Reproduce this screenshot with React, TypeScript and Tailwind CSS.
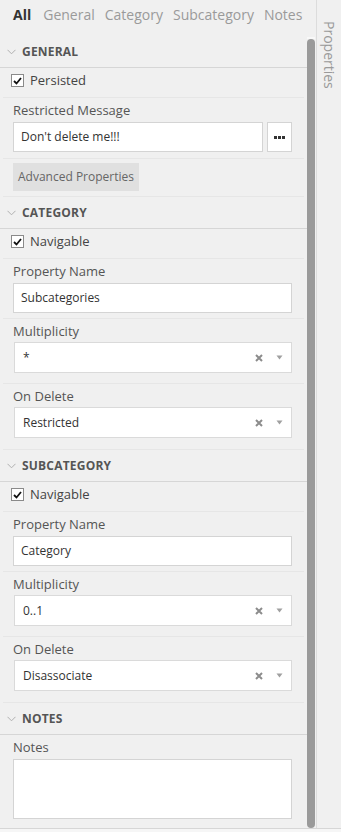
const font = { fontFamily: '"Open Sans", "Liberation Sans", sans-serif' }

function Chevron() {
  return (
    <svg width="9" height="6" viewBox="0 0 9 6" className="shrink-0">
      <polyline points="0.5,0.8 4.5,4.8 8.5,0.8" fill="none" stroke="#b0b0b0" strokeWidth="1" />
    </svg>
  )
}

function SectionHeader({ title }: { title: string }) {
  return (
    <div className="h-[32px] border-b border-[#d6d6d6] flex items-center pl-[7px] gap-[6px]">
      <Chevron />
      <span className="text-[12px] font-bold text-[#555] tracking-[0.2px]">{title}</span>
    </div>
  )
}

function CheckRow({ label }: { label: string }) {
  return (
    <div className="mx-[3px] h-[30px] border-b border-[#e6e6e6] pl-[8px] pt-[2px] flex items-start gap-[6px]">
      <div className="mt-[4px] h-[13px] w-[13px] border border-[#8a8a8a] bg-white flex items-center justify-center">
        <svg width="9" height="8" viewBox="0 0 9 8">
          <polyline points="1,4 3.5,6.5 8,1" fill="none" stroke="#111" strokeWidth="1.8" />
        </svg>
      </div>
      <span className="text-[13px] leading-[20px] text-[#444]">{label}</span>
    </div>
  )
}

function Label({ text }: { text: string }) {
  return <div className="h-[18px] leading-[18px] text-[13px] text-[#555]">{text}</div>
}

function TextField({ label, value }: { label: string; value: string }) {
  return (
    <div className="mx-[3px] border-b border-[#e6e6e6] pl-[10px] pr-[12px] pt-[3px] pb-[5px]">
      <Label text={label} />
      <div className="mt-[3px] h-[30px] border border-[#d4d4d4] bg-white flex items-center pl-[7px] text-[12px] text-[#333]">
        {value}
      </div>
    </div>
  )
}

function SelectField({ label, value, last }: { label: string; value: string; last?: boolean }) {
  return (
    <div className={`mx-[3px] border-b border-[#e6e6e6] pl-[10px] pr-[12px] pt-[3px] ${last ? "pb-[11px]" : "pb-[10px]"}`}>
      <Label text={label} />
      <div className="mt-[2px] ml-[1px] h-[31px] border border-[#dadada] bg-white flex items-center pl-[8px] pr-[8px] text-[12px] text-[#333]">
        <span className="flex-1">{value}</span>
        <svg width="8" height="8" viewBox="0 0 8 8" className="mr-[13px]">
          <path d="M1,1 L7,7 M7,1 L1,7" stroke="#8c8c8c" strokeWidth="2" />
        </svg>
        <svg width="7" height="5" viewBox="0 0 7 5">
          <polygon points="0.5,0.5 6.5,0.5 3.5,4.5" fill="#a0a0a0" />
        </svg>
      </div>
    </div>
  )
}

export default function App() {
  const tabs = ["General", "Category", "Subcategory", "Notes"]
  return (
    <div style={font} className="w-[341px] h-[832px] bg-[#f0f0f0] flex flex-col overflow-hidden">
      <div className="flex-1 flex min-h-0">
        <div className="w-[316px] flex flex-col">
          <div className="h-[36px] shrink-0 flex items-start pt-[4px] pl-[13px] gap-[10px] text-[14px] leading-[22px]">
            <span className="font-bold text-[#333] mr-[2px]">All</span>
            {tabs.map((t) => (
              <span key={t} className="text-[#9a9a9a]">{t}</span>
            ))}
          </div>
          <div className="flex-1 flex min-h-0">
            <div className="w-[307px] flex flex-col">
              <SectionHeader title="GENERAL" />
              <CheckRow label="Persisted" />
              <div className="mx-[3px] border-b border-[#e6e6e6] pl-[10px] pr-[12px] pt-[3px] pb-[6px]">
                <Label text="Restricted Message" />
                <div className="mt-[3px] flex gap-[4px]">
                  <div className="flex-1 h-[30px] border border-[#d4d4d4] bg-white flex items-center pl-[7px] text-[12px] text-[#333]">
                    Don't delete me!!!
                  </div>
                  <div className="w-[25px] h-[30px] border border-[#d4d4d4] bg-white flex items-center justify-center gap-[1px]">
                    <span className="w-[3px] h-[3px] bg-[#333]" />
                    <span className="w-[3px] h-[3px] bg-[#333]" />
                    <span className="w-[3px] h-[3px] bg-[#333]" />
                  </div>
                </div>
              </div>
              <div className="mx-[3px] border-b border-[#e6e6e6] pl-[10px] pt-[4px] pb-[5px]">
                <div className="inline-flex h-[28px] items-center px-[5px] bg-[#e0e0e0] text-[12px] text-[#666]">
                  Advanced Properties
                </div>
              </div>

              <SectionHeader title="CATEGORY" />
              <CheckRow label="Navigable" />
              <TextField label="Property Name" value="Subcategories" />
              <SelectField label="Multiplicity" value="*" />
              <SelectField label="On Delete" value="Restricted" last />

              <SectionHeader title="SUBCATEGORY" />
              <CheckRow label="Navigable" />
              <TextField label="Property Name" value="Category" />
              <SelectField label="Multiplicity" value="0..1" />
              <SelectField label="On Delete" value="Disassociate" last />

              <SectionHeader title="NOTES" />
              <div className="pl-[13px] pr-[15px] pt-[3px]">
                <Label text="Notes" />
                <div className="mt-[3px] h-[60px] border border-[#d4d4d4] bg-white" />
              </div>
            </div>
            <div className="w-[9px] flex flex-col pt-[1px]">
              <div className="h-[2px] w-[8px] bg-[#f8f8f8]" />
              <div className="flex-1 w-[8px] rounded-full bg-[#9a9a9a]" />
            </div>
          </div>
        </div>
        <div className="w-[1px] bg-[#dcdcdc]" />
        <div className="flex-1 flex justify-center pt-[21px]">
          <span className="[writing-mode:vertical-rl] text-[14px] text-[#9a9a9a] leading-[18px]">Properties</span>
        </div>
      </div>
      <div className="h-[4px] shrink-0 border-t border-[#d6d6d6] bg-[#f6f6f6]" />
    </div>
  )
}
